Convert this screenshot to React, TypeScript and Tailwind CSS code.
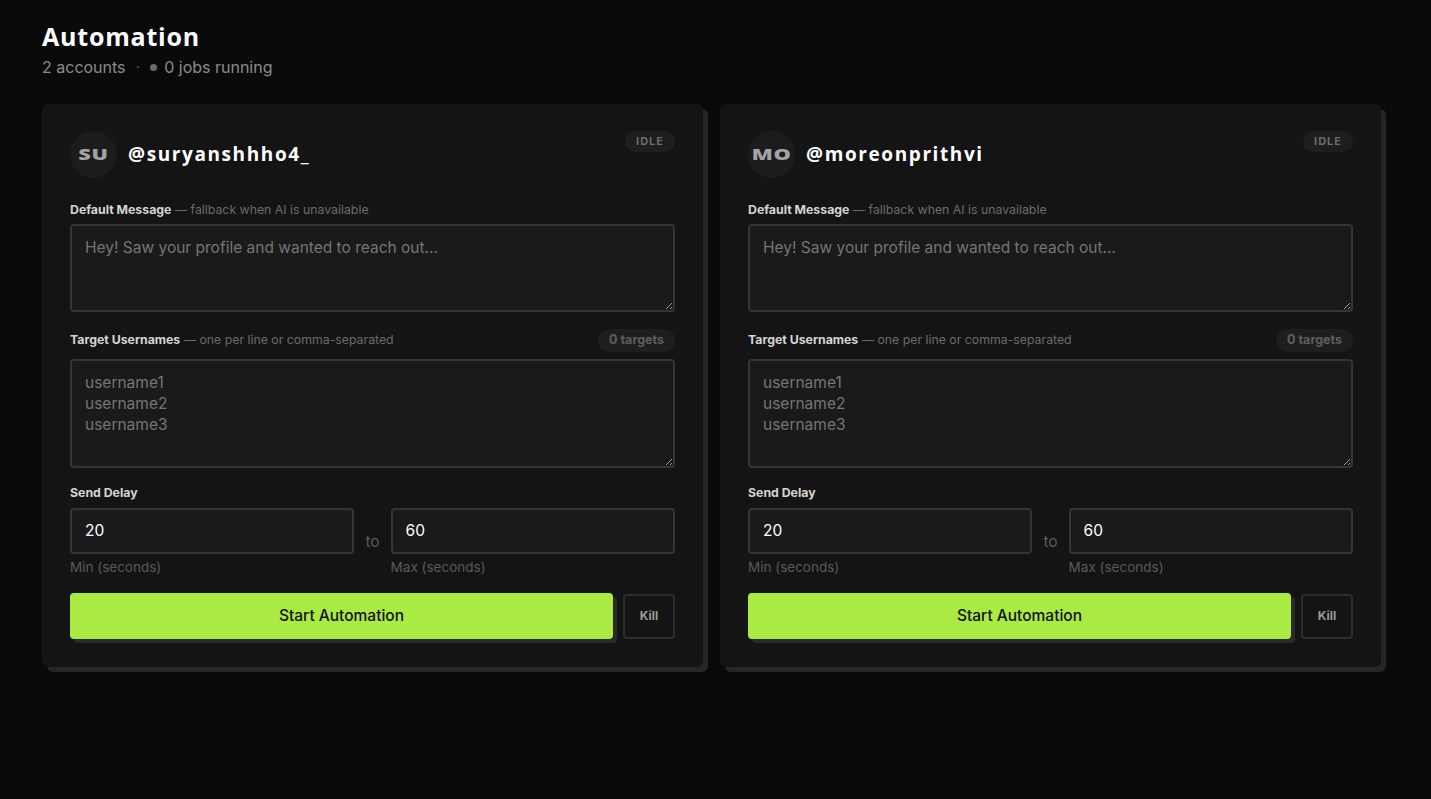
import React from 'react';

const accounts = [
  { initials: 'SU', handle: '@suryanshhho4_' },
  { initials: 'MO', handle: '@moreonprithvi' },
];

const display = { fontFamily: '"Open Sans", "DejaVu Sans", sans-serif' };

function AccountCard({ initials, handle }: { initials: string; handle: string }) {
  return (
    <div className="flex-1 rounded-md bg-[#141414] px-7 pt-[27px] pb-7 shadow-[5px_5px_0_0_#262626]">
      {/* Header */}
      <div className="flex items-start justify-between">
        <div className="flex items-center gap-[11px]">
          <div className="flex h-[47px] w-[47px] items-center justify-center rounded-full bg-[#1c1c1c]">
            <span
              className="inline-block scale-x-[1.45] text-[15px] font-extrabold tracking-[0.5px] text-[#a3a3a3]"
              style={display}
            >
              {initials}
            </span>
          </div>
          <span className="text-[19px] font-bold tracking-[1.6px] text-white" style={display}>
            {handle}
          </span>
        </div>
        <span className="rounded-full bg-[#1e1e1e] px-[11px] py-[2px] text-[11px] font-bold tracking-[1px] text-[#6b6b6b]">
          IDLE
        </span>
      </div>

      {/* Default message */}
      <div className="mt-[24px] text-[12.3px] leading-4">
        <span className="font-bold text-[#d4d4d4]">Default Message</span>
        <span className="text-[#6b6b6b]"> — fallback when AI is unavailable</span>
      </div>
      <textarea
        placeholder="Hey! Saw your profile and wanted to reach out..."
        className="mt-[6px] block h-[88px] w-full resize-y rounded-[4px] border-2 border-[#353535] bg-[#1a1a1a] px-[13px] py-[11px] text-[15.5px] leading-[21px] text-white outline-none placeholder:text-[#757575]"
      />

      {/* Targets */}
      <div className="mt-[17px] flex items-center justify-between">
        <div className="text-[12.3px] leading-4">
          <span className="font-bold text-[#d4d4d4]">Target Usernames</span>
          <span className="text-[#6b6b6b]"> — one per line or comma-separated</span>
        </div>
        <span className="rounded-full bg-[#1e1e1e] px-[11px] py-[2px] text-[12.5px] font-bold text-[#5f5f5f]">
          0 targets
        </span>
      </div>
      <textarea
        placeholder={'username1\nusername2\nusername3'}
        className="mt-[7px] block h-[109px] w-full resize-y rounded-[4px] border-2 border-[#353535] bg-[#1a1a1a] px-[13px] py-[11px] text-[15.5px] leading-[21px] text-white outline-none placeholder:text-[#757575]"
      />

      {/* Delay */}
      <div className="mt-[17px] text-[12.3px] font-bold leading-4 text-[#d4d4d4]">Send Delay</div>
      <div className="mt-[7px] flex items-start gap-[11px]">
        <div className="flex-1">
          <input
            defaultValue="20"
            className="block h-[46px] w-full rounded-[4px] border-2 border-[#353535] bg-[#1a1a1a] px-[13px] text-[15.5px] text-white outline-none"
          />
          <div className="mt-[3px] text-[13.5px] leading-5 text-[#5a5a5a]">Min (seconds)</div>
        </div>
        <span className="mt-[24px] text-[15.5px] leading-5 text-[#5a5a5a]">to</span>
        <div className="flex-1">
          <input
            defaultValue="60"
            className="block h-[46px] w-full rounded-[4px] border-2 border-[#353535] bg-[#1a1a1a] px-[13px] text-[15.5px] text-white outline-none"
          />
          <div className="mt-[3px] text-[13.5px] leading-5 text-[#5a5a5a]">Max (seconds)</div>
        </div>
      </div>

      {/* Actions */}
      <div className="mt-[16px] flex items-start gap-[10px]">
        <button className="h-[46px] flex-1 rounded-[4px] bg-[#abe943] text-[15.5px] font-medium text-[#111] shadow-[4px_4px_0_0_#2a2a2a]">
          Start Automation
        </button>
        <button className="mt-[1px] h-[45px] w-[52px] rounded-[4px] border-2 border-[#2c2c2c] text-[12px] font-bold text-[#9a9a9a]">
          Kill
        </button>
      </div>
    </div>
  );
}

export default function App() {
  return (
    <div
      className="min-h-screen bg-[#0a0a0a] px-[42px] pt-[20px] pb-10"
      style={{ fontFamily: 'Inter, "Noto Sans", sans-serif' }}
    >
      {/* Header */}
      <h1 className="text-[25px] font-bold leading-8 tracking-[0.8px] text-white" style={display}>
        Automation
      </h1>
      <div className="mt-[3px] flex items-center gap-[10px] text-[16px] leading-6 text-[#8a8a8a]">
        <span>2 accounts</span>
        <span className="text-[#444]">·</span>
        <span className="flex items-center gap-[7px]">
          <span className="h-[7px] w-[7px] rounded-full bg-[#6b6b6b]" />
          0 jobs running
        </span>
      </div>

      {/* Cards */}
      <div className="mt-[25px] flex w-[1339px] gap-[17px]">
        {accounts.map((a) => (
          <AccountCard key={a.handle} initials={a.initials} handle={a.handle} />
        ))}
      </div>
    </div>
  );
}
